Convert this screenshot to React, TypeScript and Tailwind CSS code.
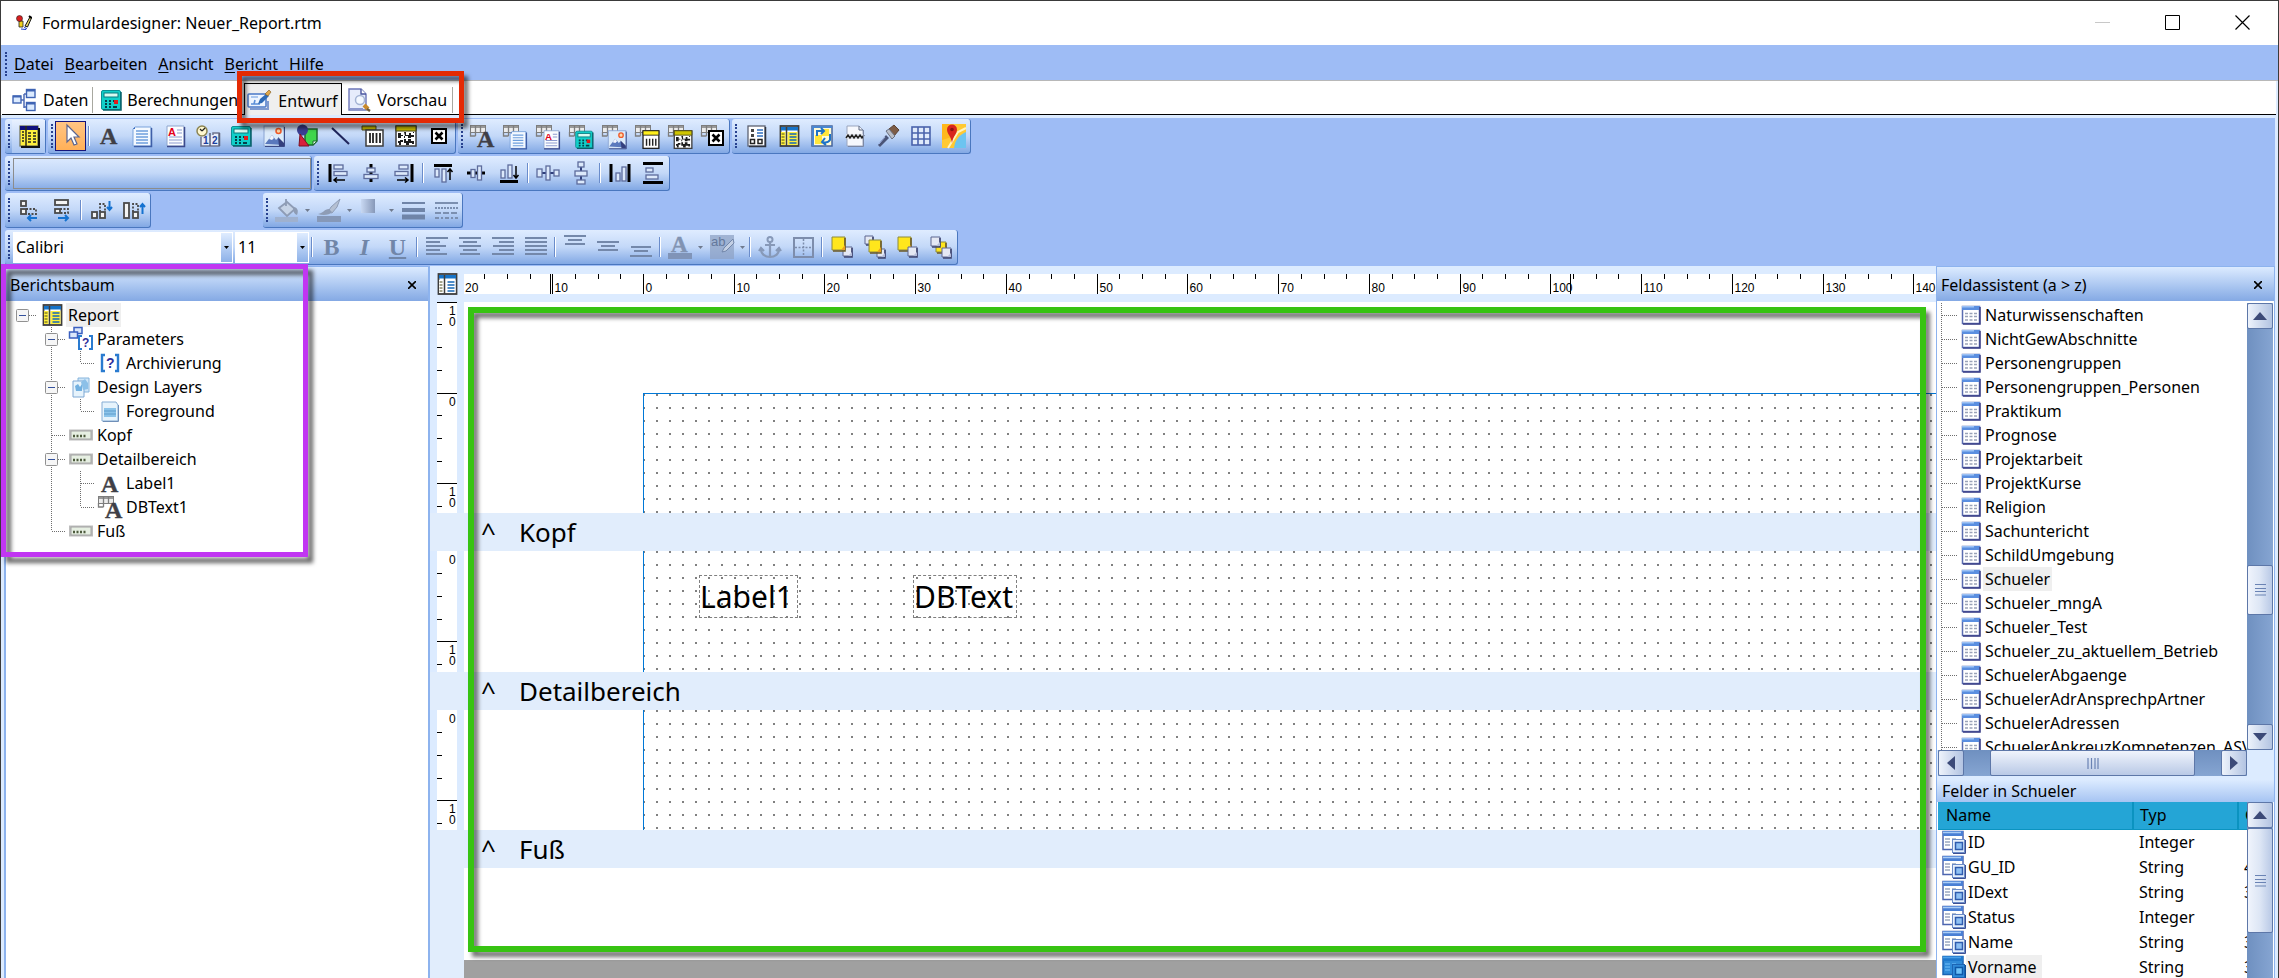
import type { ReactNode } from "react";

interface IconProps {
  children: ReactNode;
  size?: number;
}

function Svg({ children, size = 24 }: IconProps) {
  return (
    <svg width={size} height={size} viewBox="0 0 24 24" fill="none" className="shrink-0 overflow-visible" aria-hidden="true">
      {children}
    </svg>
  );
}

/* ---------- icon parts ---------- */

function LetterA({ x = 2, y = 20, size = 24, fill = "#3f3f46" }) {
  return (
    <text x={x} y={y} fontSize={size} fontWeight="700" fontFamily="Liberation Serif, serif" fill={fill} stroke={fill} strokeWidth="0.4">
      A
    </text>
  );
}

const memo = (
  <>
    <path d="M5 3h16v19H3V5z" fill="#f4f9ff" stroke="#7aa3dc" />
    <path d="M3 5l2-2v2z" fill="#3b6cc0" />
    <path d="M21.5 4v18.5H4" stroke="#3f5fa8" strokeWidth="1.5" />
    <path d="M6 7h12M6 10h12M6 13h12M6 16h12M6 19h12" stroke="#6d9fdd" strokeWidth="1.3" />
  </>
);

const richText = (
  <>
    <path d="M4 2h17v20H4z" fill="#fbfdff" stroke="#8ea6cf" />
    <path d="M21.5 3v19.5H4" stroke="#3c4a8c" strokeWidth="1.5" />
    <path d="M14 6h5M14 9h5M6 13h13M6 16h13M6 19h13" stroke="#8d9bd0" strokeWidth="1.2" />
    <text x="5" y="12" fontSize="11" fontWeight="700" fontFamily="Liberation Sans, sans-serif" fill="#e3001b">
      A
    </text>
  </>
);

const calculator = (
  <>
    <rect x="2.5" y="2.5" width="19" height="19" rx="1.5" fill="#11cfc9" stroke="#0b8f94" />
    <path d="M22 4v18H4" stroke="#075f68" strokeWidth="1.5" />
    <rect x="5" y="5" width="14" height="4" fill="#d7fbf2" stroke="#0a7b80" />
    <path d="M6 13h2M10 13h2M14 13h2M6 16h2M10 16h2M6 19h2M10 19h2M14 19h4" stroke="#053f4a" strokeWidth="2" />
    <rect x="15" y="12" width="4" height="4" fill="#e01c1c" />
  </>
);

const image = (
  <>
    <rect x="2" y="2" width="20" height="20" fill="#dcebfa" stroke="#8aa4d2" />
    <path d="M3 20l7-9 4 5 2-2 6 7z" fill="#5a79bd" />
    <path d="M7 15l3-4 2 3-2 2z" fill="#f4f7ff" />
    <path d="M16 13l6 6v3h-5z" fill="#34407e" />
    <circle cx="16.5" cy="7" r="2.5" fill="#ffd9a8" stroke="#f05a28" strokeWidth="1.5" />
    <path d="M22.5 3v19.5H3" stroke="#3b4a86" />
  </>
);

const barcode = (
  <>
    <path d="M1 2h14v4H1z" fill="#cfc400" stroke="#4d4a18" />
    <rect x="5" y="6" width="17" height="16" fill="#fff" stroke="#3c3c3c" strokeWidth="1.5" />
    <path d="M9 9v10M12 9v10M15.5 9v10M19 9v10" stroke="#222" strokeWidth="1.8" />
  </>
);

const matrixCode = (
  <>
    <rect x="2" y="2" width="20" height="20" fill="#fff" stroke="#3c3c3c" strokeWidth="1.5" />
    <path d="M2 2h20v5H2z" fill="#cfc400" stroke="#4d4a18" />
    <path
      d="M4 9h3v2h2v1H7v2H4zM10 8h2v3h3V9h2v2h3v2h-3v1h-3v-2h-3zM4 17h2v-1h3v2H7v3H5v-2H4zM10 15h2v2h2v-2h3v2h3v3h-2v-1h-3v2h-3v-2h-2zM10 12h1v2h-1zM19 8h1v1h-1z"
      fill="#1c1c1c"
    />
  </>
);

const checkBox = (
  <>
    <rect x="5" y="5" width="14" height="14" fill="#fff" stroke="#000" strokeWidth="2" />
    <path d="M8.5 8.5l7 7M15.5 8.5l-7 7" stroke="#000" strokeWidth="2.6" />
  </>
);

const dbCorner = (
  <>
    <rect x="0.5" y="1.5" width="15" height="7" fill="#ececec" stroke="#7d7d7d" />
    <path d="M0 3h16M5.5 1v11M10.5 1v7" stroke="#7d7d7d" strokeWidth="1.3" />
    <path d="M0.5 8v4h5" stroke="#7d7d7d" strokeWidth="1.3" />
  </>
);

function Db({ children }: { children: ReactNode }) {
  return (
    <Svg>
      {dbCorner}
      <g transform="translate(4.5 5) scale(.88)">{children}</g>
    </Svg>
  );
}

const reportIcon = (accent: string) => (
  <>
    <rect x="3.5" y="2" width="18" height="20" fill="#fff" stroke="#3d3d3d" strokeWidth="1.8" />
    <path d="M4 3h17v3.5H4z" fill="#1673c8" />
    <path d="M4 8h4.5v13H4z" fill={accent} />
    <path d="M10.5 8H20.5v13H10.5z" fill={accent} />
    <path d="M9.5 3v19" stroke="#3d3d3d" strokeWidth="1.5" />
    <path d="M4.5 10h3M4.5 13h3M4.5 16h3M4.5 19h3" stroke="#4c4c1c" />
    <path d="M12.5 10h7M12.5 13h7M12.5 16h7M12.5 19h7" stroke="#1668b8" strokeWidth="1.5" />
  </>
);

const reportDarkIcon = (
  <>
    <rect x="3" y="2" width="18" height="20" fill="#ffef3c" stroke="#6c6c4c" strokeWidth="1.2" />
    <path d="M3 2h18v4H3z" fill="#10107c" />
    <path d="M9 2v20" stroke="#2c2c18" strokeWidth="1.5" />
    <path d="M5 8h2M5 11h2M5 14h2M5 17h2M11 9h3M16 9h3M11 12h3M16 12h3M11 15h3M16 15h3M11 18h3M16 18h3" stroke="#222" strokeWidth="1.6" />
    <path d="M22 4v19H4" stroke="#111" strokeWidth="2" />
  </>
);

const dataIcon = (
  <>
    <path d="M8 12h4M12 6v14M12 6h3M12 19h3" stroke="#4d6bb5" strokeWidth="1.5" />
    <g fill="#dcebff" stroke="#3f64b4" strokeWidth="1.4">
      <rect x="1" y="8" width="8" height="7" />
      <rect x="14.5" y="1.5" width="8.5" height="8" />
      <rect x="14.5" y="14.5" width="8.5" height="8" />
    </g>
    <path d="M1 8.5h8M14.5 2.5h8.5M14.5 15.5h8.5" stroke="#3f64b4" strokeWidth="2" />
  </>
);

const designIcon = (
  <>
    <rect x="1" y="5" width="18" height="13" rx="1" fill="#eef5ff" stroke="#4a78c8" strokeWidth="1.5" />
    <path d="M3 20h18v-8" stroke="#7f9bd0" strokeWidth="2" />
    <path d="M4 8h7" stroke="#8fb4e8" strokeWidth="1.4" />
    <path d="M4 15h9M7 15l1-4" stroke="#5b8fd8" strokeWidth="1.6" />
    <path d="M11 15l2-5 6-5 3 2-7 7z" fill="#2f6bb6" />
    <path d="M18 5l4-4 2 2-3 4z" fill="#e3a94a" stroke="#7c571c" strokeWidth=".6" />
  </>
);

const previewIcon = (
  <>
    <path d="M2 1h12l5 5v16H2z" fill="#e6ecfb" stroke="#6c76b8" strokeWidth="1.4" />
    <path d="M14 1v5h5" fill="#fff" stroke="#4a56a0" strokeWidth="1.4" />
    <path d="M3 21h13" stroke="#8b96cc" strokeWidth="2" />
    <circle cx="13" cy="12" r="4.5" fill="#f4f9ff" fillOpacity=".9" stroke="#a4b4d4" strokeWidth="1.5" />
    <path d="M17 17l4 4" stroke="#c98a2c" strokeWidth="4" />
    <path d="M20 21l3 2" stroke="#6b5a3c" strokeWidth="2.5" />
  </>
);

const tableIcon = (
  <>
    <rect x="3.5" y="3.5" width="17" height="17" fill="#fff" stroke="#5a6cb0" strokeWidth="1.5" />
    <path d="M3 3h18v4H3z" fill="#5b8fe0" />
    <path d="M3 3h12v1.5H3z" fill="#9cc2f5" />
    <path d="M21 4v17H4" stroke="#3b3f86" strokeWidth="1.5" />
    <path d="M6 10.5h3M10.5 10.5h3M15 10.5h3M6 13.5h3M10.5 13.5h3M15 13.5h3M6 17h3M10.5 17h3M15 17h3" stroke="#9aa3b8" strokeWidth="1.3" />
  </>
);

function FieldIcon({ active = false }) {
  return (
    <svg width="24" height="25" viewBox="0 0 24 25" fill="none" className="shrink-0" aria-hidden="true">
      <rect x="1" y="1.5" width="20" height="18" fill={active ? "#2f8ad8" : "#fff"} stroke={active ? "#1b64b4" : "#4d66b0"} strokeWidth="1.5" />
      <path d="M1 1h20v5H1z" fill={active ? "#1f78cc" : "#4a7fd4"} />
      <path d="M1 2.5h18" stroke={active ? "#4aa0e8" : "#a9ccf6"} strokeWidth="1.5" />
      <path d="M3 9h5M3 12h5M3 15h5M10 9h4" stroke={active ? "#5db0f0" : "#9aa8c0"} strokeWidth="1.5" />
      <rect x="10.5" y="9.5" width="12" height="13" fill={active ? "#2f8ad8" : "#e8f1fd"} stroke={active ? "#1b64b4" : "#6b8cc8"} />
      <rect x="13.5" y="12.5" width="7" height="7" fill={active ? "#6cc0f8" : "#8fc0f4"} stroke={active ? "#0f58a8" : "#2f5cae"} strokeWidth="1.5" />
      <path d="M23.5 10v13.5H11" stroke={active ? "#0f4f98" : "#3b4f94"} />
    </svg>
  );
}

const bandIcon = (
  <>
    <rect x="0" y="6.5" width="24" height="11" fill="#bdbdbd" />
    <rect x="2" y="8" width="20" height="8" fill="#e6efe2" stroke="#a4a4a4" />
    <path d="M4 13h14" stroke="#4c5a3c" strokeWidth="2.4" strokeDasharray="2 1.5" />
  </>
);

const parameterIcon = (
  <>
    <path d="M7 4H4v16h3M17 4h3v16h-3" stroke="#2a7bd0" strokeWidth="2.4" />
    <text x="8" y="17" fontSize="14" fontWeight="700" fontFamily="Liberation Sans, sans-serif" fill="#2f2f9c">
      ?
    </text>
  </>
);

const parametersIcon = (
  <>
    <rect x="5" y="0.5" width="8" height="6" fill="#dce8fb" stroke="#3a5fc0" strokeWidth="1.5" />
    <rect x="0.5" y="5" width="8" height="6" fill="#dce8fb" stroke="#3a5fc0" strokeWidth="1.5" />
    <path d="M13 9h-3v13h3M20 9h3v13h-3" stroke="#2a7bd0" strokeWidth="2" />
    <text x="13" y="20" fontSize="12" fontWeight="700" fontFamily="Liberation Sans, sans-serif" fill="#2f2f9c">
      ?
    </text>
  </>
);

const layersIcon = (
  <>
    <path d="M9 3h11v14H9z" fill="#cfe6f8" stroke="#86b4dc" />
    <path d="M4 6h11v16H4z" fill="#e6f3fc" stroke="#7fa8d4" />
    <path d="M6 11l3-2 2 3 2-3v7H7z" fill="#72b0e0" />
    <path d="M12 7l4-3 3 4v6l-5 1z" fill="#8cc0e8" />
  </>
);

const foregroundIcon = (
  <>
    <path d="M4 3h14l2 3v16H4z" fill="#e6f3fc" stroke="#86add4" />
    <path d="M6 9h12v9H6z" fill="#8cc4ea" />
    <path d="M6 12h12M6 15h12" stroke="#5f9ccc" />
    <path d="M20.5 6v16.5H5" stroke="#6f8fb8" />
  </>
);

/* ---------- toolbar icons ---------- */

const box = { fill: "#dce9fb", stroke: "#5d6c9c", strokeWidth: 1.3 };

function Bars({ lines }: { lines: [number, number, number][] }) {
  return (
    <Svg>
      {lines.map(([x1, x2, y]) => (
        <path key={y} d={`M${x1} ${y}H${x2}`} stroke="#7488aa" strokeWidth="2" />
      ))}
    </Svg>
  );
}

interface Tool {
  label: string;
  icon: ReactNode;
  active?: boolean;
  arrow?: boolean;
}

const componentTools: Tool[] = [
  { label: "Label", icon: <Svg><LetterA x={3} /></Svg> },
  { label: "Memo", icon: <Svg>{memo}</Svg> },
  { label: "RichText", icon: <Svg>{richText}</Svg> },
  {
    label: "System Variable",
    icon: (
      <Svg>
        <circle cx="6" cy="7" r="5" fill="#fff8d0" stroke="#8b8452" strokeWidth="1.5" />
        <path d="M6 7l3-3M6 7L4 5" stroke="#222" strokeWidth="1.2" />
        <path d="M5 13v9h18V9h-6v2" fill="#e8eefa" stroke="#6f7690" strokeWidth="1.5" />
        <path d="M14 9v13M23.5 9v13" stroke="#5b6078" strokeWidth="1.5" />
        <text x="7" y="20" fontSize="10" fontWeight="700" fontFamily="Liberation Sans, sans-serif" fill="#1c3f9c">1</text>
        <text x="16" y="20" fontSize="10" fontWeight="700" fontFamily="Liberation Sans, sans-serif" fill="#1c3f9c">2</text>
      </Svg>
    ),
  },
  { label: "Variable", icon: <Svg>{calculator}</Svg> },
  { label: "Image", icon: <Svg>{image}</Svg> },
  {
    label: "Shape",
    icon: (
      <Svg>
        <path d="M10 5h12v12l-4 4h-8z" fill="#3fd64c" stroke="#1c6a2c" strokeWidth="1.5" />
        <path d="M18 21v-4h4z" fill="#eafff0" stroke="#1c6a2c" />
        <circle cx="7.5" cy="6" r="5.5" fill="#3b3f94" />
        <path d="M5 10l9 12H4z" fill="#d8203c" stroke="#7c1020" />
      </Svg>
    ),
  },
  { label: "Line", icon: <Svg><path d="M4 4l17 16" stroke="#20265c" strokeWidth="2" /></Svg> },
  { label: "BarCode", icon: <Svg>{barcode}</Svg> },
  { label: "2DBarCode", icon: <Svg>{matrixCode}</Svg> },
  { label: "CheckBox", icon: <Svg>{checkBox}</Svg> },
];

const dataTools: Tool[] = [
  { label: "DBText", icon: <Svg>{dbCorner}<LetterA x={7} y={23} size={24} /></Svg> },
  { label: "DBMemo", icon: <Db>{memo}</Db> },
  { label: "DBRichText", icon: <Db>{richText}</Db> },
  { label: "DBCalc", icon: <Db>{calculator}</Db> },
  { label: "DBImage", icon: <Db>{image}</Db> },
  {
    label: "DBBarCode",
    icon: (
      <Db>
        <rect x="4" y="2" width="18" height="20" fill="#fff" stroke="#222" strokeWidth="1.5" />
        <path d="M4 2h18v5H4z" fill="#ffef1c" stroke="#222" />
        <path d="M8 11v8M11.5 11v8M15 11v8M18.5 11v8" stroke="#222" strokeWidth="1.6" />
      </Db>
    ),
  },
  { label: "DB2DBarCode", icon: <Db>{matrixCode}</Db> },
  { label: "DBCheckBox", icon: <Svg>{dbCorner}<g transform="translate(3 2)">{checkBox}</g></Svg> },
];

const windowTools: Tool[] = [
  {
    label: "Objektinspektor",
    icon: (
      <Svg>
        <rect x="4" y="2" width="17" height="20" fill="#fff" stroke="#5c6272" strokeWidth="1.3" />
        <path d="M21.5 3v19.5H5" stroke="#2f3440" strokeWidth="1.5" />
        <path d="M7 5h3v3H7zM7 10h3v3H7z" fill="#444" />
        <rect x="6.5" y="15.5" width="4" height="4" stroke="#222" strokeWidth="1.5" />
        <rect x="14" y="15.5" width="4" height="4" stroke="#222" strokeWidth="1.5" />
        <path d="M13 6h6M13 9h6M13 12h6" stroke="#2f6fc0" strokeWidth="1.5" />
      </Svg>
    ),
  },
  { label: "Berichtsbaum", icon: <Svg>{reportIcon("#ffef3c")}</Svg> },
  {
    label: "Feldassistent",
    icon: (
      <Svg>
        <rect x="2" y="2" width="20" height="20" fill="#fffbd8" stroke="#46649c" strokeWidth="1.5" />
        <path d="M2 3h20M3 2v20" stroke="#4a86d0" strokeWidth="2" />
        <path d="M5 11h7v9H5z" fill="#ffe63c" />
        <path d="M12 5h7v7h-7z" fill="#ffe63c" />
        <path d="M7 12V7h7M11 4l3 3-3 3M20 10v6c-2 3-5 3-8 2M15 14l-3 4 4 3" stroke="#1d73c8" strokeWidth="2" />
      </Svg>
    ),
  },
  {
    label: "Seitenvorschau",
    icon: (
      <Svg>
        <path d="M4 2h12l4 4v16H4z" fill="#f6f8fd" stroke="#9aa5be" />
        <path d="M16 2v4h4" stroke="#5d6880" />
        <path d="M3 10h18v5H3z" fill="#dfe3ec" />
        <path d="M3 14l2-3 2 3 2-3 2 3 2-3 2 3 2-3 2 3 2-3" stroke="#222" strokeWidth="1.5" />
        <path d="M20.5 6v16.5H5" stroke="#7c88a4" />
      </Svg>
    ),
  },
  {
    label: "Format",
    icon: (
      <Svg>
        <path d="M13 5l5-4 5 5-5 6z" fill="#7d5c46" stroke="#5b4334" />
        <path d="M10 7l3-2 6 7-3 3z" fill="#b9bec8" stroke="#6b7080" />
        <path d="M10 11l3 3-9 9-2-2z" fill="#4a5578" />
        <path d="M3 20l6-7" stroke="#9fb0e0" />
      </Svg>
    ),
  },
  {
    label: "Raster",
    icon: (
      <Svg>
        <rect x="3" y="3" width="18" height="18" fill="#dfeafb" stroke="#4a63ac" strokeWidth="1.6" />
        <path d="M3 9h18M3 15h18M9 3v18M15 3v18" stroke="#4a63ac" strokeWidth="1.6" />
      </Svg>
    ),
  },
  {
    label: "Navigation",
    icon: (
      <Svg>
        <path d="M0 0h24v24H0z" fill="#ffc933" />
        <path d="M0 0h7l6 12-13 4z" fill="#ffb81c" />
        <path d="M24 8v16H12c1-8 5-13 12-16z" fill="#6cc4f0" />
        <path d="M6 24l10-16 8-4" stroke="#fff3c0" strokeWidth="2" />
        <path d="M10 19C9 12 5 10 5 5.500a5 5 0 0 1 10 0C15 10 11 12 10 19z" fill="#d8261c" />
        <circle cx="10" cy="5.5" r="1.8" fill="#8c1410" />
      </Svg>
    ),
  },
];

const alignTools: Tool[][] = [
  [
    {
      label: "Links ausrichten",
      icon: (
        <Svg>
          <path d="M4 3v18" stroke="#000" strokeWidth="3" />
          <rect x="8" y="4" width="9" height="4" {...box} /><rect x="8" y="10.5" width="13" height="4" {...box} />
          <path d="M8 19h11M11 16.5L8 19l3 2.5" stroke="#000" strokeWidth="1.5" />
        </Svg>
      ),
    },
    {
      label: "Horizontal zentrieren",
      icon: (
        <Svg>
          <path d="M12 3v18" stroke="#000" strokeWidth="3" />
          <rect x="8" y="7" width="8" height="4" {...box} /><rect x="5" y="13.5" width="14" height="4" {...box} />
        </Svg>
      ),
    },
    {
      label: "Rechts ausrichten",
      icon: (
        <Svg>
          <path d="M20 3v18" stroke="#000" strokeWidth="3" />
          <rect x="7" y="4" width="9" height="4" {...box} /><rect x="3" y="10.5" width="13" height="4" {...box} />
          <path d="M5 19h11M13 16.5l3 2.5-3 2.5" stroke="#000" strokeWidth="1.5" />
        </Svg>
      ),
    },
  ],
  [
    {
      label: "Oben ausrichten",
      icon: (
        <Svg>
          <path d="M3 4.5h18" stroke="#000" strokeWidth="3" />
          <rect x="4" y="8" width="4" height="8" {...box} /><rect x="11" y="8" width="4" height="13" {...box} />
          <path d="M19 19V8M16.5 11L19 8l2.5 3" stroke="#000" strokeWidth="1.5" />
        </Svg>
      ),
    },
    {
      label: "Vertikal zentrieren",
      icon: (
        <Svg>
          <path d="M3 12h18" stroke="#000" strokeWidth="3" />
          <rect x="7" y="8.5" width="4" height="8" {...box} /><rect x="13.5" y="5" width="4" height="14" {...box} />
        </Svg>
      ),
    },
    {
      label: "Unten ausrichten",
      icon: (
        <Svg>
          <path d="M3 20.5h18" stroke="#000" strokeWidth="3" />
          <rect x="4" y="9" width="4" height="8" {...box} /><rect x="11" y="4" width="4" height="13" {...box} />
          <path d="M19 5v12M16.5 14l2.5 3 2.5-3" stroke="#000" strokeWidth="1.5" />
        </Svg>
      ),
    },
  ],
  [
    {
      label: "Horizontal verteilen",
      icon: (
        <Svg>
          <path d="M1 12h22" stroke="#2f3f7c" strokeWidth="2" />
          <rect x="1" y="8" width="5" height="8" {...box} /><rect x="10" y="5" width="4" height="14" {...box} /><rect x="18" y="9" width="5" height="6" {...box} />
        </Svg>
      ),
    },
    {
      label: "Vertikal verteilen",
      icon: (
        <Svg>
          <path d="M12 1v22" stroke="#2f3f7c" strokeWidth="2" />
          <rect x="9" y="1" width="6" height="5" {...box} /><rect x="6" y="10" width="12" height="5" {...box} /><rect x="8" y="19" width="8" height="4" {...box} />
        </Svg>
      ),
    },
  ],
  [
    {
      label: "Höhe angleichen",
      icon: (
        <Svg>
          <path d="M3 3v18M21 3v18" stroke="#000" strokeWidth="3" />
          <rect x="8" y="12" width="4" height="8" {...box} /><rect x="14" y="6" width="4" height="14" {...box} />
        </Svg>
      ),
    },
    {
      label: "Breite angleichen",
      icon: (
        <Svg>
          <path d="M2 2.5h20M2 21.5h20" stroke="#000" strokeWidth="3" />
          <rect x="5" y="7" width="7" height="4" {...box} /><rect x="5" y="14" width="12" height="4" {...box} />
        </Svg>
      ),
    },
  ],
];

const dashed = { stroke: "#4a4a4a", strokeWidth: 1.8, strokeDasharray: "2 1.5" };
const solid = { stroke: "#4a4a4a", strokeWidth: 1.8, fill: "#f4f4f4" };
const blueArrow = { stroke: "#1572d0", strokeWidth: 2 };

const sizeTools: Tool[][] = [
  [
    {
      label: "Schrumpfen Breite",
      icon: (
        <Svg>
          <rect x="4" y="3" width="5" height="5" {...solid} /><rect x="4" y="11" width="5" height="5" {...solid} />
          <path d="M9 11h10v5H9" {...dashed} />
          <path d="M11 20h9M14 17l-3 3 3 3" {...blueArrow} />
        </Svg>
      ),
    },
    {
      label: "Wachsen Breite",
      icon: (
        <Svg>
          <rect x="5" y="2" width="13" height="5" {...solid} /><rect x="5" y="11" width="5" height="4" {...solid} />
          <path d="M10 11h8v4h-8" {...dashed} />
          <path d="M8 20h10M15 17l3 3-3 3" {...blueArrow} />
        </Svg>
      ),
    },
  ],
  [
    {
      label: "Schrumpfen Höhe",
      icon: (
        <Svg>
          <rect x="3" y="14" width="5" height="6" {...solid} /><rect x="11" y="14" width="5" height="6" {...solid} />
          <path d="M11 14V6h5v8" {...dashed} />
          <path d="M20.5 3v9M18 9l2.5 3L23 9" {...blueArrow} />
        </Svg>
      ),
    },
    {
      label: "Wachsen Höhe",
      icon: (
        <Svg>
          <rect x="2" y="5" width="5" height="15" {...solid} /><rect x="11" y="14" width="5" height="6" {...solid} />
          <path d="M11 14V6h5v8" {...dashed} />
          <path d="M20.5 16V6M18 9l2.5-3L23 9" {...blueArrow} />
        </Svg>
      ),
    },
  ],
];

const drawTools: Tool[] = [
  {
    label: "Füllfarbe",
    arrow: true,
    icon: (
      <Svg>
        <path d="M11 1v7M4 10l8-6 8 7-8 7z" stroke="#8e9cb5" strokeWidth="1.8" fill="#c6d3e6" />
        <path d="M18 9c4 0 6 3 4 8-3-1-4-4-4-8z" fill="#8e9cb5" />
        <path d="M0 19h23v5H0z" fill="#9fb1cf" />
      </Svg>
    ),
  },
  {
    label: "Linienfarbe",
    arrow: true,
    icon: (
      <Svg>
        <path d="M23 1l-9 8-3 5 4 1 5-6z" fill="#b5c0d2" stroke="#8e9cb5" />
        <path d="M12 11c-5 0-5 4-11 5 5 2 12 1 14-2z" fill="#8e9cb5" />
        <path d="M0 18h24v6H0z" fill="#8698b8" />
      </Svg>
    ),
  },
  {
    label: "Verlauf",
    arrow: true,
    icon: (
      <Svg>
        <defs>
          <linearGradient id="fade"><stop offset="0" stopColor="#c8d8f2" /><stop offset="1" stopColor="#8798b8" /></linearGradient>
        </defs>
        <path d="M2 1h14v14H2z" fill="url(#fade)" />
      </Svg>
    ),
  },
  { label: "Linienstärke", icon: <Svg><path d="M1 5h23" stroke="#6f84a8" strokeWidth="2" /><path d="M1 12h23" stroke="#6f84a8" strokeWidth="4" /><path d="M1 19h23" stroke="#6f84a8" strokeWidth="5" /></Svg> },
  {
    label: "Linienart",
    icon: (
      <Svg>
        <path d="M1 5h23" stroke="#7b8fb0" strokeWidth="2" />
        <path d="M1 10h23" stroke="#7b8fb0" strokeWidth="2" strokeDasharray="2 1" />
        <path d="M1 15h23" stroke="#7b8fb0" strokeWidth="2" strokeDasharray="6 2" />
        <path d="M1 20h23" stroke="#7b8fb0" strokeWidth="2" strokeDasharray="4 2 2 2" />
      </Svg>
    ),
  },
];

const styleGlyph = "text-2xl leading-none text-[#7186a8] font-[Liberation_Serif,serif]";

const layer = (front: ReactNode, back: ReactNode) => <Svg>{back}{front}</Svg>;
const yellow = (x: number, y: number, s: number) => (
  <>
    <path d={`M${x} ${y}h${s}v${s}h-${s}z`} fill="#ffe61c" stroke="#8c8a3c" />
    <path d={`M${x + s} ${y + 1}v${s}h-${s - 1}`} stroke="#6b5a28" strokeWidth="1.6" />
    <path d={`M${x + s - 4} ${y + s}l4 -5v5z`} fill="#e8a020" />
  </>
);
const grey = (x: number, y: number, s: number) => (
  <>
    <path d={`M${x} ${y}h${s}v${s}h-${s}z`} fill="#e4e8f4" stroke="#5d6690" />
    <path d={`M${x + s} ${y + 1}v${s}h-${s - 1}`} stroke="#3f4570" strokeWidth="1.6" />
    <path d={`M${x + s - 4} ${y + s}l4 -4v4z`} fill="#b4bcd8" />
  </>
);

const textTools: Tool[][] = [
  [
    { label: "Fett", icon: <span className={`${styleGlyph} font-bold`}>B</span> },
    { label: "Kursiv", icon: <span className={`${styleGlyph} font-bold italic`}>I</span> },
    { label: "Unterstrichen", icon: <span className={`${styleGlyph} font-bold underline`}>U</span> },
  ],
  [
    { label: "Linksbündig", icon: <Bars lines={[[1, 23, 3], [1, 15, 7], [1, 21, 11], [1, 15, 15], [1, 22, 19]]} /> },
    { label: "Zentriert", icon: <Bars lines={[[1, 23, 3], [5, 19, 7], [1, 23, 11], [5, 19, 15], [2, 22, 19]]} /> },
    { label: "Rechtsbündig", icon: <Bars lines={[[1, 23, 3], [8, 23, 7], [2, 23, 11], [8, 23, 15], [1, 23, 19]]} /> },
    { label: "Blocksatz", icon: <Bars lines={[[1, 23, 3], [1, 23, 7], [1, 23, 11], [1, 23, 15], [1, 23, 19]]} /> },
  ],
  [
    { label: "Oben", icon: <Bars lines={[[1, 23, 1], [5, 19, 5], [2, 22, 9]]} /> },
    { label: "Mitte", icon: <Bars lines={[[1, 23, 7], [5, 19, 11], [2, 22, 15]]} /> },
    { label: "Unten", icon: <Bars lines={[[2, 22, 12], [5, 19, 16], [1, 23, 21]]} /> },
  ],
  [
    { label: "Schriftfarbe", arrow: true, icon: <Svg><LetterA x={3} y={17} size={23} fill="#8193b2" /><path d="M0 18h24v6H0z" fill="#8094b8" /></Svg> },
    {
      label: "Hervorheben",
      arrow: true,
      icon: (
        <Svg>
          <path d="M0 0h24v24H0z" fill="#8fa3c6" fillOpacity=".75" />
          <text x="1" y="11" fontSize="13" fontFamily="Liberation Sans, sans-serif" fill="#64789c">ab</text>
          <path d="M23 4l-9 9-2 4 4-1 8-8z" fill="#c3cfe4" stroke="#7387aa" />
        </Svg>
      ),
    },
  ],
  [
    {
      label: "Verankern",
      icon: (
        <Svg>
          <circle cx="12" cy="4.5" r="2.5" stroke="#8799b8" strokeWidth="2" />
          <path d="M12 7v15M7 10h10M3 14c0 5 4 8 9 8s9-3 9-8M1 16l2-3 3 3M18 16l3-3 2 3" stroke="#8799b8" strokeWidth="2.2" />
        </Svg>
      ),
    },
    {
      label: "Rahmen",
      icon: (
        <Svg>
          <rect x="3" y="3" width="19" height="19" stroke="#7d8dac" strokeWidth="2" />
          <path d="M12.5 4v17M4 12.500h17" stroke="#7d8dac" strokeWidth="1.5" strokeDasharray="2 1.5" />
        </Svg>
      ),
    },
  ],
  [
    { label: "Nach vorne", icon: layer(yellow(2, 2, 13), grey(13, 12, 9)) },
    { label: "Eins vor", icon: layer(yellow(6, 5, 12), <>{grey(2, 1, 8)}{grey(14, 14, 8)}</>) },
    { label: "Nach hinten", icon: layer(grey(12, 12, 9), yellow(2, 2, 13)) },
    { label: "Eins zurück", icon: layer(<>{grey(2, 2, 9)}{grey(13, 13, 9)}</>, yellow(7, 7, 10)) },
  ],
];

/* ---------- toolbars ---------- */

function Toolbar({ children }: { children: ReactNode }) {
  return (
    <div className="flex h-[35px] items-center rounded-[3px] border-r border-b border-[#4a77bf] bg-linear-to-b from-[#dfecff] via-[#c3d8f8] to-[#82a8e4] pl-[3px]">
      <span className="mr-0.5 h-6 w-0.5 border-l-2 border-dotted border-[#27418f]" />
      {children}
    </div>
  );
}

function Separator() {
  return <span className="mx-0.5 h-5 w-0.5 border-l border-r border-l-[#6a8ccb] border-r-white" />;
}

function ToolButton({ tool }: { tool: Tool }) {
  return (
    <>
      <button aria-label={tool.label} title={tool.label} className="flex h-[31px] w-[33px] items-center justify-center hover:bg-[#ffd89c]">
        {tool.icon}
      </button>
      {tool.arrow && (
        <button aria-label={`${tool.label} wählen`} className="flex h-[31px] w-[9px] items-center justify-center">
          <svg width="5" height="3" viewBox="0 0 5 3"><path d="M0 0h5L2.500 3z" fill="#6f7a8e" /></svg>
        </button>
      )}
    </>
  );
}

function ToolGroups({ groups }: { groups: Tool[][] }) {
  return (
    <>
      {groups.map((group, i) => (
        <div key={group[0].label} className="flex items-center">
          {i > 0 && <Separator />}
          {group.map((tool) => (
            <ToolButton key={tool.label} tool={tool} />
          ))}
        </div>
      ))}
    </>
  );
}

function Combo({ label, value, className }: { label: string; value: string; className: string }) {
  return (
    <div className={`relative h-[31px] bg-white ${className}`}>
      <select aria-label={label} defaultValue={value} className="h-full w-full appearance-none bg-transparent pl-[3px] outline-none">
        <option>{value}</option>
      </select>
      <span className="pointer-events-none absolute inset-y-px right-px flex w-[11px] items-center justify-center bg-linear-to-b from-[#dfecff] to-[#8db1e8]">
        <svg width="5" height="3" viewBox="0 0 5 3"><path d="M0 0h5L2.500 3z" fill="#000" /></svg>
      </span>
    </div>
  );
}

function Toolbars() {
  return (
    <div className="mr-[3px] flex flex-col gap-0.5 border-t-[3px] border-[#dcebff] bg-[#9ebcf5] pt-px pb-px pl-1">
      <div className="flex gap-0.5">
        <Toolbar>
          <button aria-label="Bericht" className="flex h-[33px] w-[33px] items-center justify-center bg-linear-to-b from-[#e8f1ff] to-[#aac6f2]">
            <Svg>{reportDarkIcon}</Svg>
          </button>
        </Toolbar>
        <Toolbar>
          <button aria-label="Auswählen" className="flex h-[30px] w-[31px] items-center justify-center border border-[#15157c] bg-linear-to-b from-[#ffc583] to-[#ffb057]">
            <Svg><path d="M8 1v17l4-4 3 7 3-1-3-7h5z" fill="#fff" stroke="#5b6590" strokeWidth="1.2" /></Svg>
          </button>
          <Separator />
          <ToolGroups groups={[componentTools]} />
        </Toolbar>
        <Toolbar><ToolGroups groups={[dataTools]} /></Toolbar>
        <Toolbar><ToolGroups groups={[windowTools]} /></Toolbar>
      </div>
      <div className="flex gap-0.5">
        <Toolbar>
          <input aria-label="Inhalt" className="ml-px h-[31px] w-[298px] border border-[#8c8c8c] bg-transparent px-1 outline-none" />
        </Toolbar>
        <Toolbar><ToolGroups groups={alignTools} /></Toolbar>
      </div>
      <div className="flex gap-28">
        <Toolbar><ToolGroups groups={sizeTools} /></Toolbar>
        <Toolbar><ToolGroups groups={[drawTools]} /></Toolbar>
      </div>
      <div className="flex">
        <Toolbar>
          <Combo label="Schriftart" value="Calibri" className="mr-0.5 ml-px w-[220px]" />
          <Combo label="Schriftgröße" value="11" className="w-[74px]" />
          <Separator />
          <ToolGroups groups={textTools} />
        </Toolbar>
      </div>
    </div>
  );
}

/* ---------- title, menu, tabs ---------- */

function TitleBar() {
  return (
    <header className="flex h-11 items-center bg-white pl-[15px]">
      <svg width="16" height="16" viewBox="0 0 16 16" aria-hidden="true">
        <path d="M3 6h4v6H3z" fill="#f2d21c" stroke="#222" strokeWidth=".8" />
        <circle cx="3.5" cy="3.5" r="3" fill="#d81e1e" stroke="#222" strokeWidth=".6" />
        <path d="M9 11l5-9 1.500 1-4 9z" fill="#e8d86c" stroke="#111" />
        <path d="M13 1l2.500 2" stroke="#000" strokeWidth="2" />
        <path d="M5 14l5 .5M8 12l3 2" stroke="#1c3ccc" />
      </svg>
      <h1 className="ml-2.5 flex-1 text-base">Formulardesigner: Neuer_Report.rtm</h1>
      <button aria-label="Minimieren" className="flex w-[70px] justify-center">
        <svg width="16" height="16"><path d="M0 7.500h15" stroke="#c8c8c8" /></svg>
      </button>
      <button aria-label="Maximieren" className="flex w-[70px] justify-center">
        <svg width="16" height="16"><path d="M.5 .5h14v14H.5z" fill="none" stroke="#000" /></svg>
      </button>
      <button aria-label="Schließen" className="flex w-[70px] justify-center">
        <svg width="16" height="16"><path d="M.5 .5l14 14M14.500 .5l-14 14" stroke="#000" strokeWidth="1.2" /></svg>
      </button>
    </header>
  );
}

const menus = ["Datei", "Bearbeiten", "Ansicht", "Bericht", "Hilfe"];

function MenuBar() {
  return (
    <nav className="flex h-9 items-center border-b border-[#b8b8b8] bg-[#9ebcf5] pt-0.5 pl-1">
      <span className="mr-[7px] h-6 w-0.5 border-l-2 border-dotted border-[#27418f]" />
      <div className="flex gap-[11px]">
        {menus.map((menu) => (
          <button key={menu}>
            <span className="underline underline-offset-2">{menu[0]}</span>
            {menu.slice(1)}
          </button>
        ))}
      </div>
    </nav>
  );
}

function TabBar() {
  return (
    <div role="tablist" className="mr-0.5 flex h-[34px] items-end bg-white pl-px">
      <button role="tab" className="flex h-full items-center border-b border-black pt-1 pr-1 pl-2.5">
        <Svg>{dataIcon}</Svg>
        <span className="ml-[7px]">Daten</span>
      </button>
      <button role="tab" className="flex h-full items-center border-b border-black pt-1">
        <span className="mr-1.5 h-[26px] w-px bg-[#a8a8a0]" />
        <Svg>{calculator}</Svg>
        <span className="mr-0.5 ml-1 w-[115px] text-left">Berechnungen</span>
      </button>
      <button role="tab" aria-selected="true" className="flex h-8 w-[98px] items-center border-x border-t border-black bg-[#efefef] pt-0.5 pl-0.5">
        <Svg>{designIcon}</Svg>
        <span className="ml-[7px]">Entwurf</span>
      </button>
      <button role="tab" className="flex h-full items-center border-b border-black pt-1 pl-[5px]">
        <Svg>{previewIcon}</Svg>
        <span className="mr-[5px] ml-1.5">Vorschau</span>
        <span className="h-[26px] w-px bg-[#a8a8a0]" />
      </button>
      <span className="h-full flex-1 border-b border-black" />
    </div>
  );
}

/* ---------- report tree ---------- */

type Cell = "none" | "line" | "tee" | "end" | "root" | "node";

const treeRows: { label: string; cells: Cell[]; icon: ReactNode; selected?: boolean }[] = [
  { label: "Report", cells: ["root"], icon: reportIcon("#ffef3c"), selected: true },
  { label: "Parameters", cells: ["none", "node"], icon: parametersIcon },
  { label: "Archivierung", cells: ["none", "line", "end"], icon: parameterIcon },
  { label: "Design Layers", cells: ["none", "node"], icon: layersIcon },
  { label: "Foreground", cells: ["none", "line", "end"], icon: foregroundIcon },
  { label: "Kopf", cells: ["none", "tee"], icon: bandIcon },
  { label: "Detailbereich", cells: ["none", "node"], icon: bandIcon },
  { label: "Label1", cells: ["none", "line", "tee"], icon: <LetterA x={3} y={21} /> },
  { label: "DBText1", cells: ["none", "line", "end"], icon: <>{dbCorner}<LetterA x={7} y={23} size={24} /></> },
  { label: "Fuß", cells: ["none", "end"], icon: bandIcon },
];

function TreeCell({ kind }: { kind: Cell }) {
  const expandable = kind === "root" || kind === "node";
  return (
    <svg width="29" height="24" className="shrink-0" aria-hidden="true">
      <g stroke="#6e6e6e" strokeDasharray="1 1">
        {(kind === "line" || kind === "tee" || kind === "node") && <path d="M14.500 0v24" />}
        {kind === "end" && <path d="M14.500 0v12" />}
        {kind !== "none" && kind !== "line" && <path d="M15 12.500h14" />}
      </g>
      {expandable && (
        <>
          <rect x="8.5" y="6.5" width="12" height="12" rx="1" fill="#f6f6f6" stroke="#919191" />
          <path d="M11 12.500h7" stroke="#34519c" />
        </>
      )}
    </svg>
  );
}

function PanelHeader({ title }: { title: string }) {
  return (
    <div className="flex h-[34px] items-center justify-between bg-linear-to-b from-[#dcebff] to-[#84a9e4] pt-0.5 pr-3 pl-1">
      <h2 className="text-base">{title}</h2>
      <button aria-label={`${title} schließen`}>
        <svg width="8" height="8"><path d="M0 0l8 8M8 0L0 8" stroke="#000" strokeWidth="1.6" /></svg>
      </button>
    </div>
  );
}

function ReportTree() {
  return (
    <aside className="flex w-[426px] shrink-0 flex-col border-x-2 border-t border-[#8db3ee] bg-white">
      <PanelHeader title="Berichtsbaum" />
      <ul className="pt-0.5 pl-0.5">
        {treeRows.map((row) => (
          <li key={row.label} className="flex h-6 items-center">
            {row.cells.map((cell, i) => (
              <TreeCell key={i} kind={cell} />
            ))}
            <span className="flex w-[29px] justify-center">
              <Svg>{row.icon}</Svg>
            </span>
            <span className={row.selected ? "bg-[#efefef] px-0.5 leading-6" : "px-0.5 leading-6"}>{row.label}</span>
          </li>
        ))}
      </ul>
    </aside>
  );
}

/* ---------- design area ---------- */

const CM = 90.74;
const rulerFont = "Liberation Sans Narrow, Liberation Sans, sans-serif";

function HorizontalRuler() {
  const origin = 179.5;
  // page is 140 mm wide, four ticks per 10 mm
  const ticks = Array.from({ length: 64 }, (_, i) => i - 7);
  return (
    <svg className="h-5 w-full bg-white" aria-hidden="true">
      <text x="1" y="18" fontSize="12" fontFamily={rulerFont}>20</text>
      <path d="M86.500 0v20M1106.500 0v20" stroke="#000" />
      {ticks.map((i) => {
        const x = Math.floor(origin + (i * CM) / 4) + 0.5;
        const major = i % 4 === 0;
        return (
          <g key={i}>
            <path d={`M${x} 0v${major ? 20 : 5}`} stroke="#000" />
            {major && (
              <text x={x + 2} y="18" fontSize="12" fontFamily={rulerFont}>
                {Math.abs(i / 4) * 10}
              </text>
            )}
          </g>
        );
      })}
    </svg>
  );
}

function VerticalRuler({ start = 0 }: { start?: number }) {
  // start is the offset of the zero mark from the top of the section
  const first = start > 0 ? -4 : 0;
  const ticks = Array.from({ length: start > 0 ? 10 : 6 }, (_, i) => i + first);
  return (
    <svg className="mx-[7px] h-full w-5 shrink-0 bg-white" aria-hidden="true">
      {ticks.map((i) => {
        const y = Math.floor(start + (i * CM) / 4) + 0.5;
        const major = i % 4 === 0;
        const label = String(Math.abs(i / 4) * 10).split("");
        return (
          <g key={i}>
            {(i !== 0 || start > 0) && <path d={`M0 ${y}h${major ? 20 : 5}`} stroke="#000" />}
            {major &&
              label.map((digit, n) => (
                <text key={n} x="12" y={y + 12 + n * 11} fontSize="12" fontFamily={rulerFont}>
                  {digit}
                </text>
              ))}
          </g>
        );
      })}
    </svg>
  );
}

const dots =
  "bg-[conic-gradient(from_270deg_at_2px_2px,#808080_25%,transparent_0)] bg-size-[13px_13px] bg-position-[-1px_0px]";

function Band({ name }: { name: string }) {
  return (
    <div className="flex h-[38px] shrink-0 items-center bg-[#e1edfc] pl-[51px] text-[26px] leading-none">
      <button aria-label={`${name} einklappen`} className="w-[38px] text-left">^</button>
      <span>{name}</span>
    </div>
  );
}

function DesignArea() {
  return (
    <main className="flex min-w-0 flex-1 flex-col bg-[#dcebff]">
      <div className="flex h-9 shrink-0 items-center">
        <span className="flex w-[34px] shrink-0 justify-center">
          <Svg>{reportIcon("#ffffff")}</Svg>
        </span>
        <HorizontalRuler />
      </div>
      <div className="relative flex min-h-0 flex-1 flex-col">
        <div className="flex h-[211px] shrink-0">
          <VerticalRuler start={91} />
          <div className="flex-1 bg-white pt-[91px] pl-[179px]">
            <div className={`h-full border-t border-l border-[#0078d7] ${dots}`} />
          </div>
        </div>
        <Band name="Kopf" />
        <div className="flex h-[121px] shrink-0">
          <VerticalRuler />
          <div className="flex-1 bg-white pl-[179px]">
            <div className={`relative h-full border-l border-[#0078d7] text-[30px] leading-[41px] ${dots}`}>
              <span className="absolute top-6 left-[55px] w-[99px] border border-dashed border-[#808080]">Label1</span>
              <span className="absolute top-6 left-[269px] w-[104px] border border-dashed border-[#808080]">DBText</span>
            </div>
          </div>
        </div>
        <Band name="Detailbereich" />
        <div className="flex h-[120px] shrink-0">
          <VerticalRuler />
          <div className="flex-1 bg-white pl-[179px]">
            <div className={`h-full border-l border-[#0078d7] ${dots}`} />
          </div>
        </div>
        <Band name="Fuß" />
        <div className="flex min-h-0 flex-1 bg-[#e1edfc] pl-[34px]">
          <div className="flex flex-1 flex-col bg-[#a0a0a0]">
            <div className="h-[92px] bg-white" />
          </div>
        </div>
        <div className="pointer-events-none absolute top-[5px] right-2.5 bottom-[26px] left-[38px] border-[6px] border-[#37c312] drop-shadow-[4px_5px_2px_rgba(0,0,0,0.55)]" />
      </div>
    </main>
  );
}

/* ---------- field assistant ---------- */

const tables = [
  "Naturwissenschaften",
  "NichtGewAbschnitte",
  "Personengruppen",
  "Personengruppen_Personen",
  "Praktikum",
  "Prognose",
  "Projektarbeit",
  "ProjektKurse",
  "Religion",
  "Sachuntericht",
  "SchildUmgebung",
  "Schueler",
  "Schueler_mngA",
  "Schueler_Test",
  "Schueler_zu_aktuellem_Betrieb",
  "SchuelerAbgaenge",
  "SchuelerAdrAnsprechpArtner",
  "SchuelerAdressen",
  "SchuelerAnkreuzKompetenzen_ASV",
];

const fields = [
  { name: "ID", type: "Integer", size: "" },
  { name: "GU_ID", type: "String", size: "40" },
  { name: "IDext", type: "String", size: "30" },
  { name: "Status", type: "Integer", size: "" },
  { name: "Name", type: "String", size: "30" },
  { name: "Vorname", type: "String", size: "30" },
];

const arrows = {
  up: "M0 8l7-8 7 8z",
  down: "M0 0l7 8 7-8z",
  left: "M8 0L0 7l8 7z",
  right: "M0 0l8 7-8 7z",
};

function ScrollButton({ dir }: { dir: keyof typeof arrows }) {
  const flat = dir === "up" || dir === "down";
  return (
    <button aria-label={dir} className="flex size-[26px] shrink-0 items-center justify-center rounded-xs border border-[#5d77a8] bg-linear-to-r from-[#eef3fb] to-[#b3c4e2]">
      <svg width={flat ? 14 : 8} height={flat ? 8 : 14}><path d={arrows[dir]} fill="#3c4a78" /></svg>
    </button>
  );
}

function VerticalThumb({ className }: { className: string }) {
  return (
    <div className={`flex items-center justify-center rounded-xs border border-[#5d77a8] bg-linear-to-r from-[#f0f4fc] via-[#dde6f5] to-[#b9c9e6] ${className}`}>
      <svg width="11" height="12"><path d="M0 .5h11M0 4.500h11M0 7.500h11M0 11h11" stroke="#6a83b4" strokeWidth="1.2" /></svg>
    </div>
  );
}

function FieldAssistant() {
  return (
    <aside className="mr-[3px] flex w-[339px] shrink-0 flex-col border-x border-t border-[#8db3ee] bg-[#dcebff]">
      <PanelHeader title="Feldassistent (a > z)" />
      <div className="flex h-[449px] shrink-0 bg-white pt-0.5">
        <div className="flex min-w-0 flex-1 flex-col">
          <ul className="min-h-0 flex-1 overflow-hidden pl-1">
            {tables.map((name) => (
              <li key={name} className="flex h-6 items-center">
                <svg width="18" height="24" className="shrink-0" aria-hidden="true">
                  <path d="M.5 0v24M1 12.500h16" stroke="#6e6e6e" strokeDasharray="1 1" />
                </svg>
                <Svg>{tableIcon}</Svg>
                <span className={name === "Schueler" ? "bg-[#efefef] px-0.5 leading-6" : "px-0.5 leading-6"}>{name}</span>
              </li>
            ))}
          </ul>
        </div>
        <div className="mr-px flex w-[26px] flex-col bg-linear-to-r from-[#6f90c0] to-[#86a5d2]">
          <ScrollButton dir="up" />
          <div className="flex flex-1 flex-col pt-[236px]">
            <VerticalThumb className="h-[50px]" />
          </div>
          <ScrollButton dir="down" />
        </div>
      </div>
      <div className="mr-[27px] ml-px flex h-[26px] shrink-0 bg-linear-to-b from-[#6f90c0] to-[#86a5d2]">
        <ScrollButton dir="left" />
        <div className="mx-[26px] flex flex-1 items-center justify-center rounded-xs border border-[#5d77a8] bg-linear-to-b from-[#f0f4fc] to-[#b9c9e6]">
          <svg width="12" height="11"><path d="M1 0v11M4.500 0v11M8 0v11M11 0v11" stroke="#6a83b4" strokeWidth="1.2" /></svg>
        </div>
        <ScrollButton dir="right" />
      </div>
      <h3 className="mt-1 h-[22px] shrink-0 bg-linear-to-b from-[#dcebff] to-[#a6c4f2] pl-[5px] leading-[22px]">Felder in Schueler</h3>
      <div className="flex min-h-0 flex-1 bg-white pl-px">
        <div className="min-w-0 flex-1 overflow-hidden">
          <table className="w-full table-fixed border-collapse text-left">
            <thead>
              <tr className="h-[27px] border-b border-[#0b93c0] bg-[#24a5d6]">
                <th className="w-[195px] border-r-2 border-[#0b93c0] pl-2 font-normal">Name</th>
                <th className="w-[105px] border-r-2 border-[#0b93c0] pl-1.5 font-normal">Typ</th>
                <th className="overflow-hidden pl-1.5 font-normal">Größe</th>
              </tr>
            </thead>
            <tbody>
              {fields.map((field) => (
                <tr key={field.name} className="h-[25px]">
                  <td className="p-0 pl-1">
                    <div className="flex h-[25px] items-center">
                      <FieldIcon active={field.name === "Vorname"} />
                      <span className={field.name === "Vorname" ? "bg-[#efefef] pr-1.5 pl-0.5 leading-[25px]" : "pl-0.5 leading-[25px]"}>{field.name}</span>
                    </div>
                  </td>
                  <td className="p-0 pl-1.5">{field.type}</td>
                  <td className="overflow-hidden p-0 pl-1.5">{field.size}</td>
                </tr>
              ))}
            </tbody>
          </table>
        </div>
        <div className="mr-px flex w-[26px] flex-col bg-linear-to-r from-[#6f90c0] to-[#86a5d2]">
          <ScrollButton dir="up" />
          <VerticalThumb className="h-[105px]" />
        </div>
      </div>
    </aside>
  );
}

export default function App() {
  return (
    <div className="relative flex h-screen flex-col overflow-hidden border-x border-t border-[#3a3a3a] bg-[#dcebff] font-[Noto_Sans,sans-serif] text-base leading-6 text-black">
      <TitleBar />
      <MenuBar />
      <TabBar />
      <Toolbars />
      <div className="flex min-h-0 flex-1 pl-[3px]">
        <ReportTree />
        <DesignArea />
        <FieldAssistant />
      </div>
      <div className="pointer-events-none absolute top-[70px] left-[236px] h-[52px] w-[227px] border-[5px] border-[#e42a04] drop-shadow-[4px_5px_2px_rgba(0,0,0,0.6)]" />
      <div className="pointer-events-none absolute top-[263px] left-0 h-[293px] w-[307px] border-[5px] border-[#c136f2] drop-shadow-[5px_6px_2px_rgba(0,0,0,0.6)]" />
    </div>
  );
}
